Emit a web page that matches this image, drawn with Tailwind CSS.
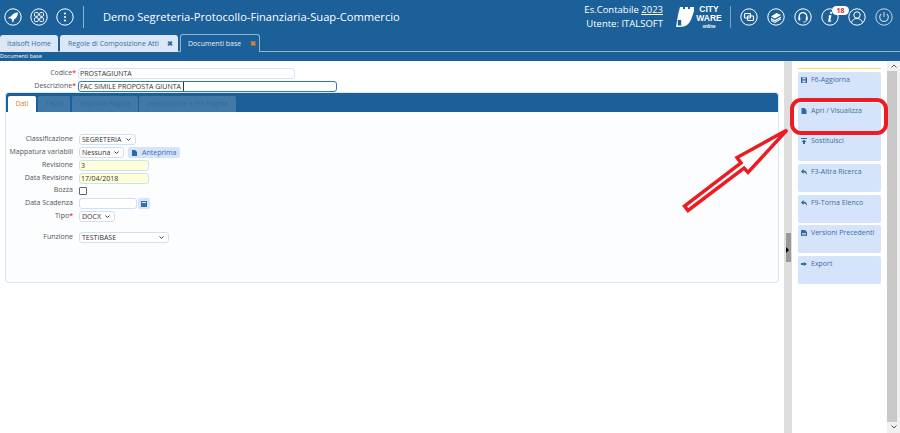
<!DOCTYPE html>
<html><head><meta charset="utf-8">
<script src="https://cdn.jsdelivr.net/npm/@tailwindcss/browser@4"></script>
</head>
<body class="w-[900px] h-[433px] overflow-hidden relative bg-white font-['Open_Sans',sans-serif] text-[7px] text-[#555]">
<!-- header -->
<header class="h-[34px] bg-[#1c6099] flex items-center text-white">
  <div class="flex items-center gap-[8px] pl-[4px] w-[83px] shrink-0">
    <svg class="w-[18px] h-[18px]" viewBox="0 0 18 18" fill="none" stroke="#fff"><circle cx="9" cy="9" r="8.2"/><path fill="#fff" stroke="none" d="M13.5 4.5c-3 .2-5 1.500-6.500 4l-2 .5-1 1.500 2.500-.3 1.800 1.800-.3 2.500 1.500-1 .5-2c2.500-1.500 3.800-3.500 4-6.500z"/></svg>
    <svg class="w-[18px] h-[18px]" viewBox="0 0 18 18" fill="none" stroke="#fff"><circle cx="9" cy="9" r="8.200"/><rect x="4.500" y="4.500" width="3.800" height="3.800" rx="1"/><rect x="9.700" y="4.500" width="3.800" height="3.800" rx="1"/><rect x="4.500" y="9.700" width="3.800" height="3.800" rx="1"/><rect x="9.700" y="9.700" width="3.800" height="3.800" rx="1"/></svg>
    <svg class="w-[18px] h-[18px]" viewBox="0 0 18 18" fill="none" stroke="#fff"><circle cx="9" cy="9" r="8.200"/><g fill="#fff" stroke="none"><circle cx="9" cy="5.500" r="1.100"/><circle cx="9" cy="9" r="1.100"/><circle cx="9" cy="12.500" r="1.100"/></g></svg>
  </div>
  <div class="w-px h-[22px] bg-white/50 shrink-0"></div>
  <div class="pl-[19px] text-[11.15px] w-[488px] shrink-0 whitespace-nowrap">Demo Segreteria-Protocollo-Finanziaria-Suap-Commercio</div>
  <div class="w-[91px] shrink-0 text-[9.5px] leading-[14px] text-right whitespace-nowrap -mt-px"><div>Es.Contabile <span class="underline">2023</span></div><div>Utente: ITALSOFT</div></div>
  <div class="flex items-center pl-[13px] gap-[2px] w-[67px] shrink-0">
    <svg class="w-[18px] h-[20px] shrink-0" viewBox="0 0 18 20"><path fill="#fff" d="M4 0h3v2h2V0h3v2h2V0h4v4c-2 6-3 11-7 14-3 2-6 2-11 2L2 8z"/><path fill="#1c6099" d="M1.800 13h3.400v5.500H1.800z"/></svg>
    <div class="font-['Liberation_Sans',sans-serif] text-[8.5px] leading-[9.8px] font-bold text-center w-[26px] shrink-0"><div>CITY</div><div>WARE</div><div class="text-[4.5px] leading-[5.2px]">online</div></div>
  </div>
  <div class="w-px h-[22px] bg-white/40 shrink-0"></div>
  <div class="flex items-center gap-[9px] pl-[9px] relative">
    <svg class="w-[18px] h-[18px]" viewBox="0 0 18 18" fill="none" stroke="#fff"><circle cx="9" cy="9" r="8.200"/><rect x="4.500" y="5.500" width="6" height="4.500" rx=".8" stroke-width="1.200"/><rect x="7.500" y="8" width="6" height="4.500" rx=".8" stroke-width="1.200"/></svg>
    <svg class="w-[18px] h-[18px]" viewBox="0 0 18 18" fill="none" stroke="#fff"><circle cx="9" cy="9" r="8.200"/><path fill="#fff" stroke="none" d="M4 8.500l5.500-3.500 4.500 2-6 3.500zM4 10l4 2 6-3.500v1.500l-6 3.500-4-2zM4 12l4 2 6-3.500v1l-6 3.500-4-2z"/></svg>
    <svg class="w-[18px] h-[18px]" viewBox="0 0 18 18" fill="none" stroke="#fff"><circle cx="9" cy="9" r="8.200"/><path stroke-width="1.300" d="M5.200 10V8.500a3.800 3.800 0 0 1 7.600 0V10"/><rect x="4.300" y="9" width="2" height="3.500" rx="1" fill="#fff" stroke="none"/><rect x="11.700" y="9" width="2" height="3.500" rx="1" fill="#fff" stroke="none"/><path d="M12.500 12.500c0 1-1.500 1.500-3 1.500"/></svg>
    <svg class="w-[18px] h-[18px]" viewBox="0 0 18 18" fill="none" stroke="#fff"><circle cx="9" cy="9" r="8.200"/><path fill="#fff" stroke="none" d="M9.300 3.800h2l-.4 2h-2zM8 7.300h2.500l-1.200 5.200h1l-.3 1.200H7l1.100-5.200h-.8z"/></svg>
    <svg class="w-[18px] h-[18px]" viewBox="0 0 18 18" fill="none" stroke="#fff"><circle cx="9" cy="9" r="8.200"/><circle cx="9" cy="7" r="3.200"/><path d="M3.500 14.500c1-3 3-4 5.500-4s4.500 1 5.500 4"/></svg>
    <svg class="w-[18px] h-[18px]" viewBox="0 0 18 18" fill="none" stroke="#fff" opacity=".75"><circle cx="9" cy="9" r="8.200"/><path d="M6.200 5.800a4.300 4.300 0 1 0 5.600 0M9 4v5" stroke-width="1.100"/></svg>
    <span class="absolute left-[101px] top-[-2px] w-[17px] h-[9px] rounded-full bg-white text-[#e8202a] font-bold text-[7px] leading-[9px] text-center">18</span>
  </div>
</header>
<!-- tabs -->
<nav class="h-[18px] bg-[#1c6099] flex items-end gap-[2px] relative">
  <div class="absolute left-0 right-0 bottom-0 h-px bg-[#8db4d4]"></div>
  <div class="relative h-[17px] w-[58px] bg-[#dbe7f6] rounded-t-[3px] text-[#3a6f9f] leading-[17px] text-center">Italsoft Home</div>
  <div class="relative h-[17px] w-[118px] bg-[#dbe7f6] rounded-t-[3px] text-[#3a6f9f] leading-[17px] pl-[8px] flex justify-between pr-[5px]"><span>Regole di Composizione Atti</span><span class="font-bold text-[#2d6a9f]">✖</span></div>
  <div class="relative h-[18px] w-[80px] bg-[#1c6099] border border-b-0 border-[#8db4d4] rounded-t-[3px] text-[#e3edf7] leading-[17px] pl-[7px] flex justify-between pr-[3px]"><span>Documenti base</span><span class="font-bold text-[#e0802f]">✖</span></div>
</nav>
<div class="h-[9px] bg-[#1c6099] text-white text-[5.5px] leading-[8px]">Documenti base</div>
<!-- body -->
<main class="flex h-[372px]">
  <section class="w-[784px] shrink-0 pl-[5px] pr-[5px] pt-[6px]">
    <div class="flex items-center h-[13px]">
      <div class="w-[73px] text-right pr-[2px]">Codice<span class="text-red-600">*</span></div>
      <div class="w-[217px] h-[11px] border border-[#d5e5f5] rounded-[3px] pl-[1px] leading-[9px] text-[#333]">PROSTAGIUNTA</div>
    </div>
    <div class="flex items-center h-[13px]">
      <div class="w-[73px] text-right pr-[2px]">Descrizione<span class="text-red-600">*</span></div>
      <div class="w-[259px] h-[11px] border border-[#2a78c8] rounded-[3px] pl-[1px] leading-[9px] text-[#333] flex items-center">FAC SIMILE PROPOSTA GIUNTA<span class="w-px h-[9px] bg-[#333] ml-[2px]"></span></div>
    </div>
    <div class="-mt-px w-[774px] h-[191px] border border-[#d9e7f4] rounded-[3px] bg-[#fbfdfe]">
      <div class="h-[19px] bg-[#1c6099] rounded-t-[3px] flex items-end pl-[2px]">
        <div class="h-[16px] w-[28px] bg-white rounded-t-[2px] text-[#e0802f] text-center leading-[16px]">Dati</div>
        <div class="ml-[2px] h-[16px] w-[32px] bg-[#4279a9] rounded-t-[2px] text-center leading-[16px] text-[#2a6ca3]">Testo</div>
        <div class="ml-[2px] h-[16px] w-[66px] bg-[#4279a9] rounded-t-[2px] text-center leading-[16px] text-[#2a6ca3]">Imposta Pagina</div>
        <div class="ml-[1px] h-[16px] w-[97px] bg-[#4279a9] rounded-t-[2px] text-center leading-[16px] text-[#2a6ca3]">Intestazione e Piè Pagina</div>
      </div>
      <div class="pt-[21px] flex flex-col">
        <div class="flex items-center h-[13px]"><div class="w-[67px] text-right">Classificazione</div><div class="ml-[6px] w-[57px] h-[11px] bg-white border border-[#cfe0f0] rounded-[3px] pl-[2px] leading-[9px] text-[#333] flex justify-between items-center pr-[4px]"><span>SEGRETERIA</span><svg class="w-[5px] h-[3px]" viewBox="0 0 5 3" fill="none" stroke="#444"><path d="M.5.500L2.500 2.500 4.500.5"/></svg></div></div>
        <div class="flex items-center h-[13px]"><div class="w-[67px] text-right whitespace-nowrap">Mappatura variabili</div><div class="ml-[6px] w-[45px] h-[11px] bg-white border border-[#cfe0f0] rounded-[3px] pl-[2px] leading-[9px] text-[#333] flex justify-between items-center pr-[4px]"><span>Nessuna</span><svg class="w-[5px] h-[3px]" viewBox="0 0 5 3" fill="none" stroke="#444"><path d="M.5.500L2.500 2.500 4.500.5"/></svg></div>
          <div class="ml-[4px] w-[52px] h-[11px] bg-[#d5e4fb] rounded-[2px] text-[#3a6f9f] leading-[11px] flex items-center pl-[4px] gap-[5px]"><svg class="w-[5px] h-[6px]" viewBox="0 0 5 6"><path fill="#2d6a9f" d="M0 0h3l2 2v4H0z"/></svg>Anteprima</div></div>
        <div class="flex items-center h-[13px]"><div class="w-[67px] text-right">Revisione</div><div class="ml-[6px] w-[70px] h-[11px] bg-[#ffffd9] border border-[#cfe0f0] rounded-[3px] pl-[1px] leading-[9px] text-[#333]">3</div></div>
        <div class="flex items-center h-[12px]"><div class="w-[67px] text-right">Data Revisione</div><div class="ml-[6px] w-[70px] h-[11px] bg-[#ffffd9] border border-[#cfe0f0] rounded-[3px] pl-[1px] leading-[9px] text-[#333]">17/04/2018</div></div>
        <div class="flex items-center h-[13px]"><div class="w-[67px] text-right">Bozza</div><div class="ml-[6px] w-[8px] h-[8px] border border-[#666] rounded-[1px] bg-white"></div></div>
        <div class="flex items-center h-[13px]"><div class="w-[67px] text-right">Data Scadenza</div><div class="ml-[6px] w-[58px] h-[11px] bg-white border border-[#cfe0f0] rounded-[3px]"></div><div class="ml-[1px] w-[12px] h-[11px] bg-[#d5e4fb] rounded-[2px] flex items-center justify-center"><svg class="w-[6px] h-[6px]" viewBox="0 0 6 6"><path fill="#3a6f9f" d="M0 0h6v6H0z"/><path fill="#d5e4fb" d="M1 1h4v1H1z"/></svg></div></div>
        <div class="flex items-center h-[12px]"><div class="w-[67px] text-right">Tipo<span class="text-red-600">*</span></div><div class="ml-[6px] w-[36px] h-[11px] bg-white border border-[#cfe0f0] rounded-[3px] pl-[2px] leading-[9px] text-[#333] flex justify-between items-center pr-[4px]"><span>DOCX</span><svg class="w-[5px] h-[3px]" viewBox="0 0 5 3" fill="none" stroke="#444"><path d="M.5.500L2.500 2.500 4.500.5"/></svg></div></div>
        <div class="flex items-center h-[13px] mt-[9px]"><div class="w-[67px] text-right">Funzione</div><div class="ml-[6px] w-[90px] h-[11px] bg-white border border-[#cfe0f0] rounded-[3px] pl-[2px] leading-[9px] text-[#333] flex justify-between items-center pr-[4px]"><span>TESTIBASE</span><svg class="w-[5px] h-[3px]" viewBox="0 0 5 3" fill="none" stroke="#444"><path d="M.5.500L2.500 2.500 4.500.5"/></svg></div></div>
      </div>
    </div>
  </section>
  <div class="w-[8px] shrink-0 bg-[#dedede] relative"><div class="absolute left-[2px] top-[172px] w-[5px] h-[29px] bg-[#999]"></div><div class="absolute left-[2px] top-[186px] w-0 h-0 border-y-[3px] border-y-transparent border-l-[3px] border-l-black"></div></div>
  <aside class="w-[95px] shrink-0 pl-[6px] pr-[6px] pt-[7px]">
    <div class="h-px bg-[#f7dc6f] mb-[3px]"></div>
    <div class="flex flex-col gap-[2.67px] text-[#3a6f9f]">
      <div class="h-[28px] bg-[#d5e4fb] rounded-[2px] flex items-start pl-[3px] pt-[3px] gap-[4px] leading-[10px]"><svg class="w-[6px] h-[6px] mt-[2px]" viewBox="0 0 6 6"><path fill="#2d6a9f" d="M0 0h5l1 1v5H0z"/><path fill="#d5e4fb" d="M1.500 .6h3v1.600h-3zM1.500 3.500h3V5.400h-3z"/></svg>F6-Aggiorna</div>
      <div class="h-[28px] bg-[#d5e4fb] rounded-[2px] flex items-start pl-[3px] pt-[3px] gap-[4px] leading-[10px]"><svg class="w-[6px] h-[6px] mt-[2px]" viewBox="0 0 5 6"><path fill="#2d6a9f" d="M0 0h3l2 2v4H0z"/></svg>Apri / Visualizza</div>
      <div class="h-[28px] bg-[#d5e4fb] rounded-[2px] flex items-start pl-[3px] pt-[3px] gap-[4px] leading-[10px]"><svg class="w-[6px] h-[6px] mt-[2px]" viewBox="0 0 6 6"><path fill="#2d6a9f" d="M0 0h6v1H0zM3 1.500L5.500 4H4v2H2V4H.5z"/></svg>Sostituisci</div>
      <div class="h-[28px] bg-[#d5e4fb] rounded-[2px] flex items-start pl-[3px] pt-[3px] gap-[4px] leading-[10px]"><svg class="w-[6px] h-[6px] mt-[2px]" viewBox="0 0 6 6"><path fill="#2d6a9f" d="M2.500 0v1.500C5 1.500 6 3 6 6 5 4 4.200 3.500 2.500 3.500V5L0 2.500z"/></svg>F3-Altra Ricerca</div>
      <div class="h-[28px] bg-[#d5e4fb] rounded-[2px] flex items-start pl-[3px] pt-[3px] gap-[4px] leading-[10px]"><svg class="w-[6px] h-[6px] mt-[2px]" viewBox="0 0 6 6"><path fill="#2d6a9f" d="M2.500 0v1.500C5 1.500 6 3 6 6 5 4 4.200 3.500 2.500 3.500V5L0 2.500z"/></svg>F9-Torna Elenco</div>
      <div class="h-[28px] bg-[#d5e4fb] rounded-[2px] flex items-start pl-[3px] pt-[3px] gap-[4px] leading-[10px] whitespace-nowrap"><svg class="w-[6px] h-[6px] mt-[2px]" viewBox="0 0 6 6"><path fill="#2d6a9f" d="M0 0h4l2 2v4H0z"/><path fill="#d5e4fb" d="M1 3h4v.7H1zM1 4.500h4v.7H1z"/></svg>Versioni Precedenti</div>
      <div class="h-[28px] bg-[#d5e4fb] rounded-[2px] flex items-start pl-[3px] pt-[3px] gap-[4px] leading-[10px]"><svg class="w-[6px] h-[6px] mt-[2px]" viewBox="0 0 6 6"><path fill="#2d6a9f" d="M3 1l3 2-3 2V4H0V2h3z"/></svg>Export</div>
    </div>
  </aside>
  <div class="w-[13px] shrink-0 bg-[#f1f1f1] flex flex-col items-center">
    <div class="h-[10px] flex items-center"><svg class="w-[6px] h-[4px]" viewBox="0 0 6 4" fill="none" stroke="#555"><path d="M.5 3.500L3 1l2.500 2.500"/></svg></div>
    <div class="w-[10px] h-[351px] bg-[#c8c8c8] self-start"></div>
    <div class="h-[10px] flex items-center"><svg class="w-[6px] h-[4px]" viewBox="0 0 6 4" fill="none" stroke="#555"><path d="M.5.500L3 3l2.500-2.500"/></svg></div>
  </div>
</main>
<!-- annotation overlay -->
<svg class="absolute left-0 top-0 pointer-events-none" width="900" height="433" viewBox="0 0 900 433" fill="none">
  <rect x="792" y="100" width="94" height="33" rx="9" stroke="#ec1c24" stroke-width="4"/>
  <path d="M787 130L737 157.500 741 163 684.500 206 688 210.500 744 168 748 172.500z" stroke="#ec1c24" stroke-width="3.500" fill="#fff" stroke-linejoin="miter"/>
</svg>
</body></html>
